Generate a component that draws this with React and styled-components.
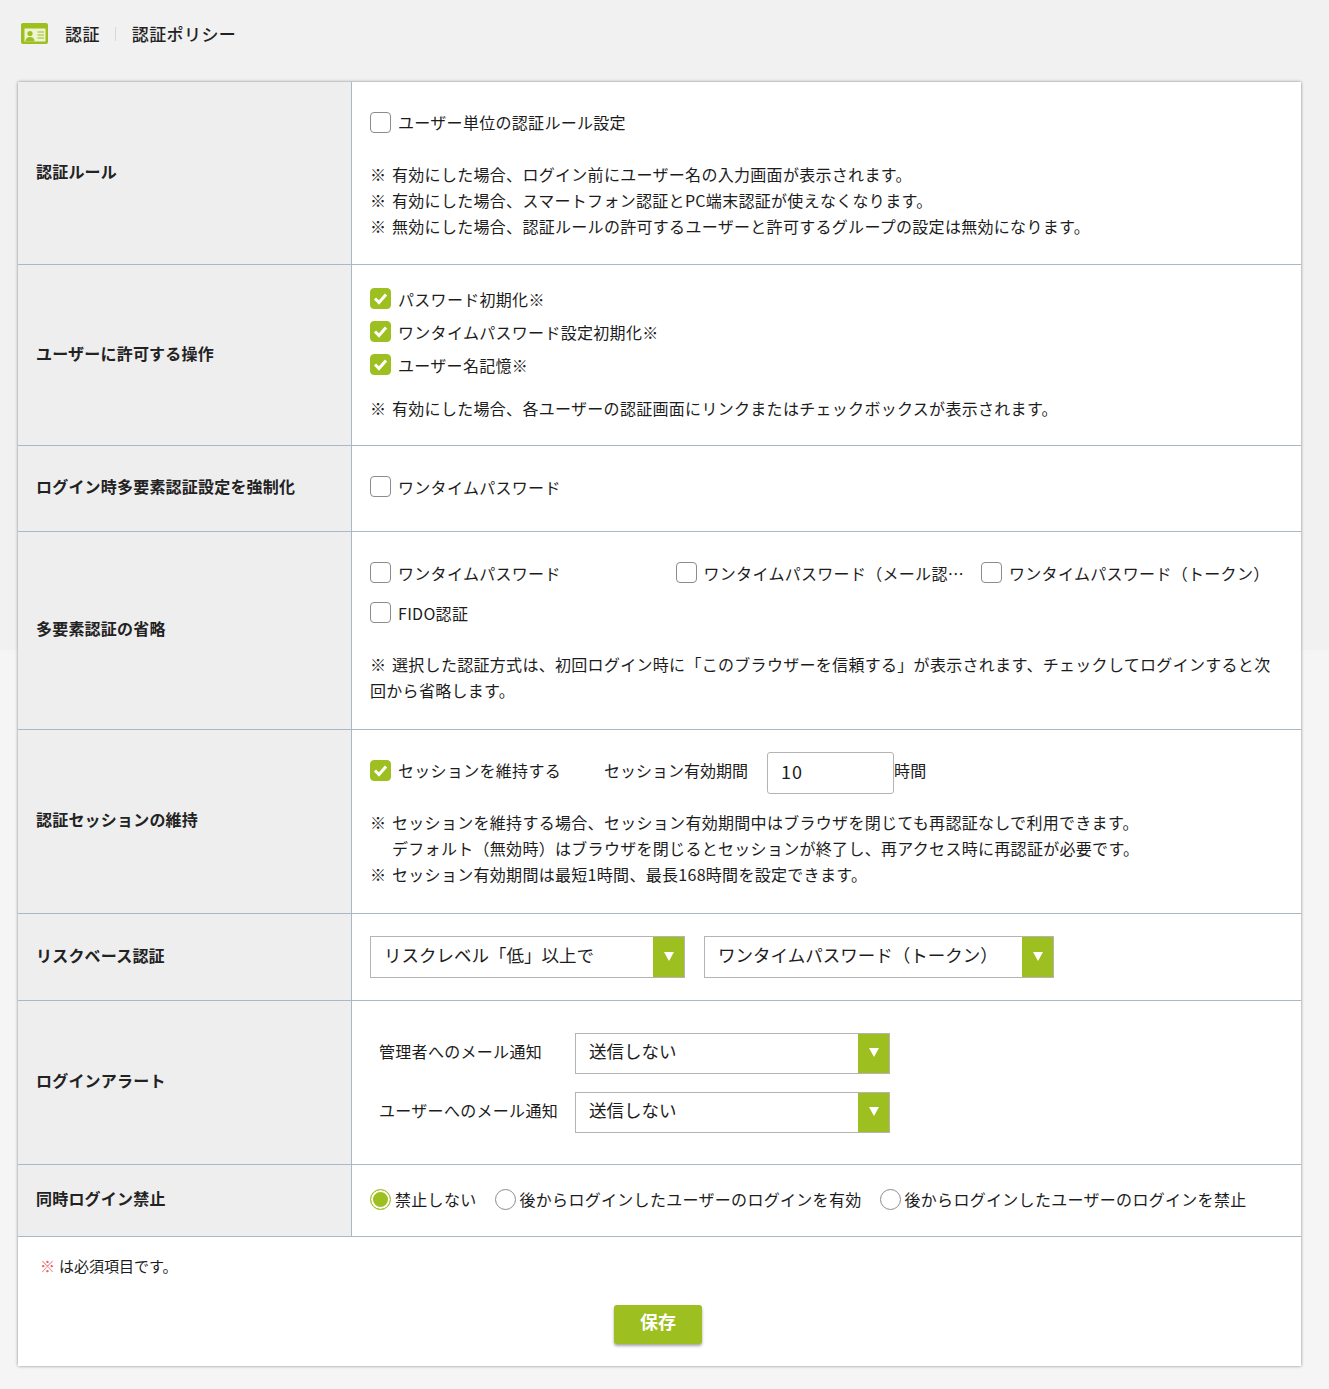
import React from 'react';
import styled, { createGlobalStyle } from 'styled-components';

const GlobalStyle = createGlobalStyle`
    html, body {
        margin: 0;
        padding: 0;
    }

    body {
        background: linear-gradient(#f1f1f1 650px, #f5f5f5 650px);
        color: #1c1c1c;
        font-family: "Noto Sans CJK JP", "Noto Sans", sans-serif;
        font-size: 16px;
        letter-spacing: 0.3px;
    }
`;

const Page = styled.div`
    width: 1329px;
    height: 1389px;
    box-sizing: border-box;
    padding: 0 28px 0 18px;
    overflow: hidden;
`;

const Header = styled.header`
    display: flex;
    align-items: center;
    height: 82px;
    box-sizing: border-box;
    padding: 0 0 15px 3px;
    font-size: 17px;
    font-weight: 500;
    letter-spacing: 0.4px;
    color: #222;
`;

const HeaderTitle = styled.span`
    margin-left: 17px;
`;

const HeaderSep = styled.span`
    width: 1px;
    height: 14px;
    margin: 0 16px 0 15px;
    background: #d8d8d8;
`;

const Card = styled.main`
    background: #fff;
    height: 1284px;
    box-shadow: 0 0 3px rgba(0, 0, 0, 0.45);
`;

const Row = styled.section`
    display: grid;
    grid-template-columns: 334px 1fr;
    height: ${(p) => p.$height}px;
    border-bottom: 1px solid #a8b8c4;
    box-sizing: border-box;
`;

const Label = styled.div`
    display: flex;
    align-items: center;
    padding: 0 0 5px 18px;
    background: #eeeeee;
    border-right: 1px solid #a8b8c4;
    font-weight: 700;
    font-size: 16px;
    letter-spacing: 0.2px;
    color: #222;
`;

const Content = styled.div`
    display: flex;
    flex-direction: column;
    justify-content: center;
    padding: 0 18px ${(p) => p.$bottom || 0}px;
    min-width: 0;
`;

const CheckLine = styled.label`
    display: flex;
    align-items: center;
    height: ${(p) => p.$height || 33}px;
    white-space: nowrap;
    min-width: 0;
`;

const Box = styled.span`
    flex: none;
    display: flex;
    align-items: center;
    justify-content: center;
    box-sizing: border-box;
    width: 21px;
    height: 21px;
    margin-right: 7px;
    border-radius: 4px;
    border: 1px solid ${(p) => (p.$on ? '#9dbf1f' : '#8c8c8c')};
    background: ${(p) => (p.$on ? '#9dbf1f' : '#fff')};
`;

const Ellipsis = styled.span`
    overflow: hidden;
    text-overflow: ellipsis;
`;

const Notes = styled.div`
    margin-top: ${(p) => p.$top}px;
    line-height: 26px;
`;

const Note = styled.div`
    padding-left: ${(p) => (p.$cont ? 22 : 0)}px;
`;

const Mark = styled.span`
    display: inline-block;
    width: 22px;
`;

const Required = styled.div`
    font-size: 15px;
    line-height: 20px;
    letter-spacing: 0;
`;

const RequiredMark = styled.span`
    color: #e8606a;
    margin-right: 4px;
`;

const MfaGrid = styled.div`
    display: grid;
    grid-template-columns: repeat(3, 305.5px);
    grid-auto-rows: 40px;
    margin-right: -18px;

    label {
        padding-right: 14px;
    }
`;

const SessionLine = styled.div`
    display: flex;
    align-items: center;
    height: 42px;
`;

const SessionCheck = styled.div`
    margin-bottom: 5px;
`;

const SessionLabel = styled.span`
    margin: 0 19px 6px 43px;
    letter-spacing: 0;
`;

const SessionUnit = styled.span`
    margin-bottom: 6px;
`;

const NumberInput = styled.div`
    width: 127px;
    height: 42px;
    box-sizing: border-box;
    padding: 0 0 4px 13px;
    display: flex;
    align-items: center;
    border: 1px solid #b4b4b4;
    border-radius: 3px;
    font-size: 18px;
    letter-spacing: 1px;
    background: #fff;
`;

const SelectRow = styled.div`
    display: flex;
    align-items: center;
    gap: ${(p) => p.$gap || 0}px;
`;

const SelectBox = styled.div`
    display: flex;
    align-items: stretch;
    flex: none;
    width: ${(p) => p.$width}px;
    height: ${(p) => p.$h || 42}px;
    box-sizing: border-box;
    border: 1px solid #b4b4b4;
    background: #fff;
    font-size: 17.5px;
    letter-spacing: 0;
`;

const SelectText = styled.span`
    flex: 1;
    padding: 0 0 5px 13px;
    display: flex;
    align-items: center;
    white-space: nowrap;
`;

const SelectArrow = styled.span`
    flex: none;
    width: 31px;
    display: flex;
    align-items: center;
    justify-content: center;
    background: #9dbf1f;

    &::after {
        content: '';
        width: 0;
        height: 0;
        margin-bottom: 2px;
        border-left: 5px solid transparent;
        border-right: 5px solid transparent;
        border-top: 9px solid #fff;
    }
`;

const AlertLine = styled.div`
    display: flex;
    align-items: center;
    padding-left: 9px;
    margin-top: ${(p) => p.$top || 0}px;
`;

const AlertLabel = styled.span`
    width: 196px;
    flex: none;
    padding-bottom: 5px;
    white-space: nowrap;
`;

const RadioLine = styled.div`
    display: flex;
    align-items: center;
    white-space: nowrap;
`;

const RadioItem = styled.label`
    display: flex;
    align-items: center;
    margin-right: 18px;
`;

const RadioText = styled.span`
    padding-bottom: 2px;
`;

const RadioDot = styled.span`
    flex: none;
    box-sizing: border-box;
    width: 21px;
    height: 21px;
    margin-right: 4px;
    border-radius: 50%;
    border: 1px solid ${(p) => (p.$on ? '#9dbf1f' : '#8c8c8c')};
    background: ${(p) => (p.$on ? '#9dbf1f' : '#fff')};
    box-shadow: ${(p) => (p.$on ? 'inset 0 0 0 2px #fff' : 'none')};
`;

const Footer = styled.footer`
    padding: 19px 0 0 22px;
`;

const SaveRow = styled.div`
    display: flex;
    justify-content: center;
    margin: 29px 0 0 -22px;
    padding-right: 3px;
`;

const SaveButton = styled.button`
    width: 88px;
    height: 39px;
    padding: 0 0 8px;
    border: none;
    border-radius: 3px;
    background: #9dbf1f;
    color: #fff;
    font-family: inherit;
    font-size: 18px;
    font-weight: 700;
    letter-spacing: 0;
    box-shadow: 0 2px 3px rgba(0, 0, 0, 0.35);
`;

const Check = ({ on, children, height }) => (
    <CheckLine $height={height}>
        <Box $on={on}>
            {on && (
                <svg width="15" height="13" viewBox="0 0 15 13">
                    <path d="M2 6.5 L6 10.5 L13 2.5" fill="none" stroke="#fff" strokeWidth="3" />
                </svg>
            )}
        </Box>
        <Ellipsis>{children}</Ellipsis>
    </CheckLine>
);

const Select = ({ width, h, children }) => (
    <SelectBox $width={width} $h={h}>
        <SelectText>{children}</SelectText>
        <SelectArrow />
    </SelectBox>
);

const CardIcon = () => (
    <svg width="27" height="21" viewBox="0 0 27 21">
        <rect x="0" y="0" width="27" height="21" rx="2" fill="#9dbf1f" />
        <rect x="3.5" y="5.5" width="21" height="13" fill="#eef3d2" />
        <circle cx="9" cy="10.5" r="2.6" fill="#9dbf1f" />
        <path d="M4.5 18.5 C4.5 15 7 14 9 14 C11 14 13.5 15 13.5 18.5 Z" fill="#9dbf1f" />
        <path d="M16.5 9 H23 M16.5 12 H23 M16.5 15 H23" stroke="#9dbf1f" strokeWidth="1.1" />
    </svg>
);

const App = () => {
    return (
        <Page>
            <GlobalStyle />
            <Header>
                <CardIcon />
                <HeaderTitle>認証</HeaderTitle>
                <HeaderSep />
                <span>認証ポリシー</span>
            </Header>
            <Card>
                <Row $height={183}>
                    <Label>認証ルール</Label>
                    <Content $bottom={2}>
                        <Check>ユーザー単位の認証ルール設定</Check>
                        <Notes $top={22}>
                            <Note><Mark>※</Mark>有効にした場合、ログイン前にユーザー名の入力画面が表示されます。</Note>
                            <Note><Mark>※</Mark>有効にした場合、スマートフォン認証とPC端末認証が使えなくなります。</Note>
                            <Note><Mark>※</Mark>無効にした場合、認証ルールの許可するユーザーと許可するグループの設定は無効になります。</Note>
                        </Notes>
                    </Content>
                </Row>
                <Row $height={181}>
                    <Label>ユーザーに許可する操作</Label>
                    <Content $bottom={7}>
                        <Check on>パスワード初期化※</Check>
                        <Check on>ワンタイムパスワード設定初期化※</Check>
                        <Check on>ユーザー名記憶※</Check>
                        <Notes $top={14}>
                            <Note><Mark>※</Mark>有効にした場合、各ユーザーの認証画面にリンクまたはチェックボックスが表示されます。</Note>
                        </Notes>
                    </Content>
                </Row>
                <Row $height={86}>
                    <Label>ログイン時多要素認証設定を強制化</Label>
                    <Content $bottom={4}>
                        <Check>ワンタイムパスワード</Check>
                    </Content>
                </Row>
                <Row $height={198}>
                    <Label>多要素認証の省略</Label>
                    <Content $bottom={6}>
                        <MfaGrid>
                            <Check height={40}>ワンタイムパスワード</Check>
                            <Check height={40}>ワンタイムパスワード（メール認証）</Check>
                            <Check height={40}>ワンタイムパスワード（トークン）</Check>
                            <Check height={40}>FIDO認証</Check>
                        </MfaGrid>
                        <Notes $top={18}>
                            <Note><Mark>※</Mark>選択した認証方式は、初回ログイン時に「このブラウザーを信頼する」が表示されます、チェックしてログインすると次回から省略します。</Note>
                        </Notes>
                    </Content>
                </Row>
                <Row $height={184}>
                    <Label>認証セッションの維持</Label>
                    <Content $bottom={5}>
                        <SessionLine>
                            <SessionCheck><Check on>セッションを維持する</Check></SessionCheck>
                            <SessionLabel>セッション有効期間</SessionLabel>
                            <NumberInput>10</NumberInput>
                            <SessionUnit>時間</SessionUnit>
                        </SessionLine>
                        <Notes $top={15}>
                            <Note><Mark>※</Mark>セッションを維持する場合、セッション有効期間中はブラウザを閉じても再認証なしで利用できます。</Note>
                            <Note $cont>デフォルト（無効時）はブラウザを閉じるとセッションが終了し、再アクセス時に再認証が必要です。</Note>
                            <Note><Mark>※</Mark>セッション有効期間は最短1時間、最長168時間を設定できます。</Note>
                        </Notes>
                    </Content>
                </Row>
                <Row $height={87}>
                    <Label>リスクベース認証</Label>
                    <Content>
                        <SelectRow $gap={19}>
                            <Select width={315}>リスクレベル「低」以上で</Select>
                            <Select width={350}>ワンタイムパスワード（トークン）</Select>
                        </SelectRow>
                    </Content>
                </Row>
                <Row $height={164}>
                    <Label>ログインアラート</Label>
                    <Content>
                        <AlertLine>
                            <AlertLabel>管理者へのメール通知</AlertLabel>
                            <Select width={315} h={41}>送信しない</Select>
                        </AlertLine>
                        <AlertLine $top={18}>
                            <AlertLabel>ユーザーへのメール通知</AlertLabel>
                            <Select width={315} h={41}>送信しない</Select>
                        </AlertLine>
                    </Content>
                </Row>
                <Row $height={72}>
                    <Label>同時ログイン禁止</Label>
                    <Content $bottom={2}>
                        <RadioLine>
                            <RadioItem><RadioDot $on /><RadioText>禁止しない</RadioText></RadioItem>
                            <RadioItem><RadioDot /><RadioText>後からログインしたユーザーのログインを有効</RadioText></RadioItem>
                            <RadioItem><RadioDot /><RadioText>後からログインしたユーザーのログインを禁止</RadioText></RadioItem>
                        </RadioLine>
                    </Content>
                </Row>
                <Footer>
                    <Required><RequiredMark>※</RequiredMark>は必須項目です。</Required>
                    <SaveRow>
                        <SaveButton>保存</SaveButton>
                    </SaveRow>
                </Footer>
            </Card>
        </Page>
    );
};

export default App;
